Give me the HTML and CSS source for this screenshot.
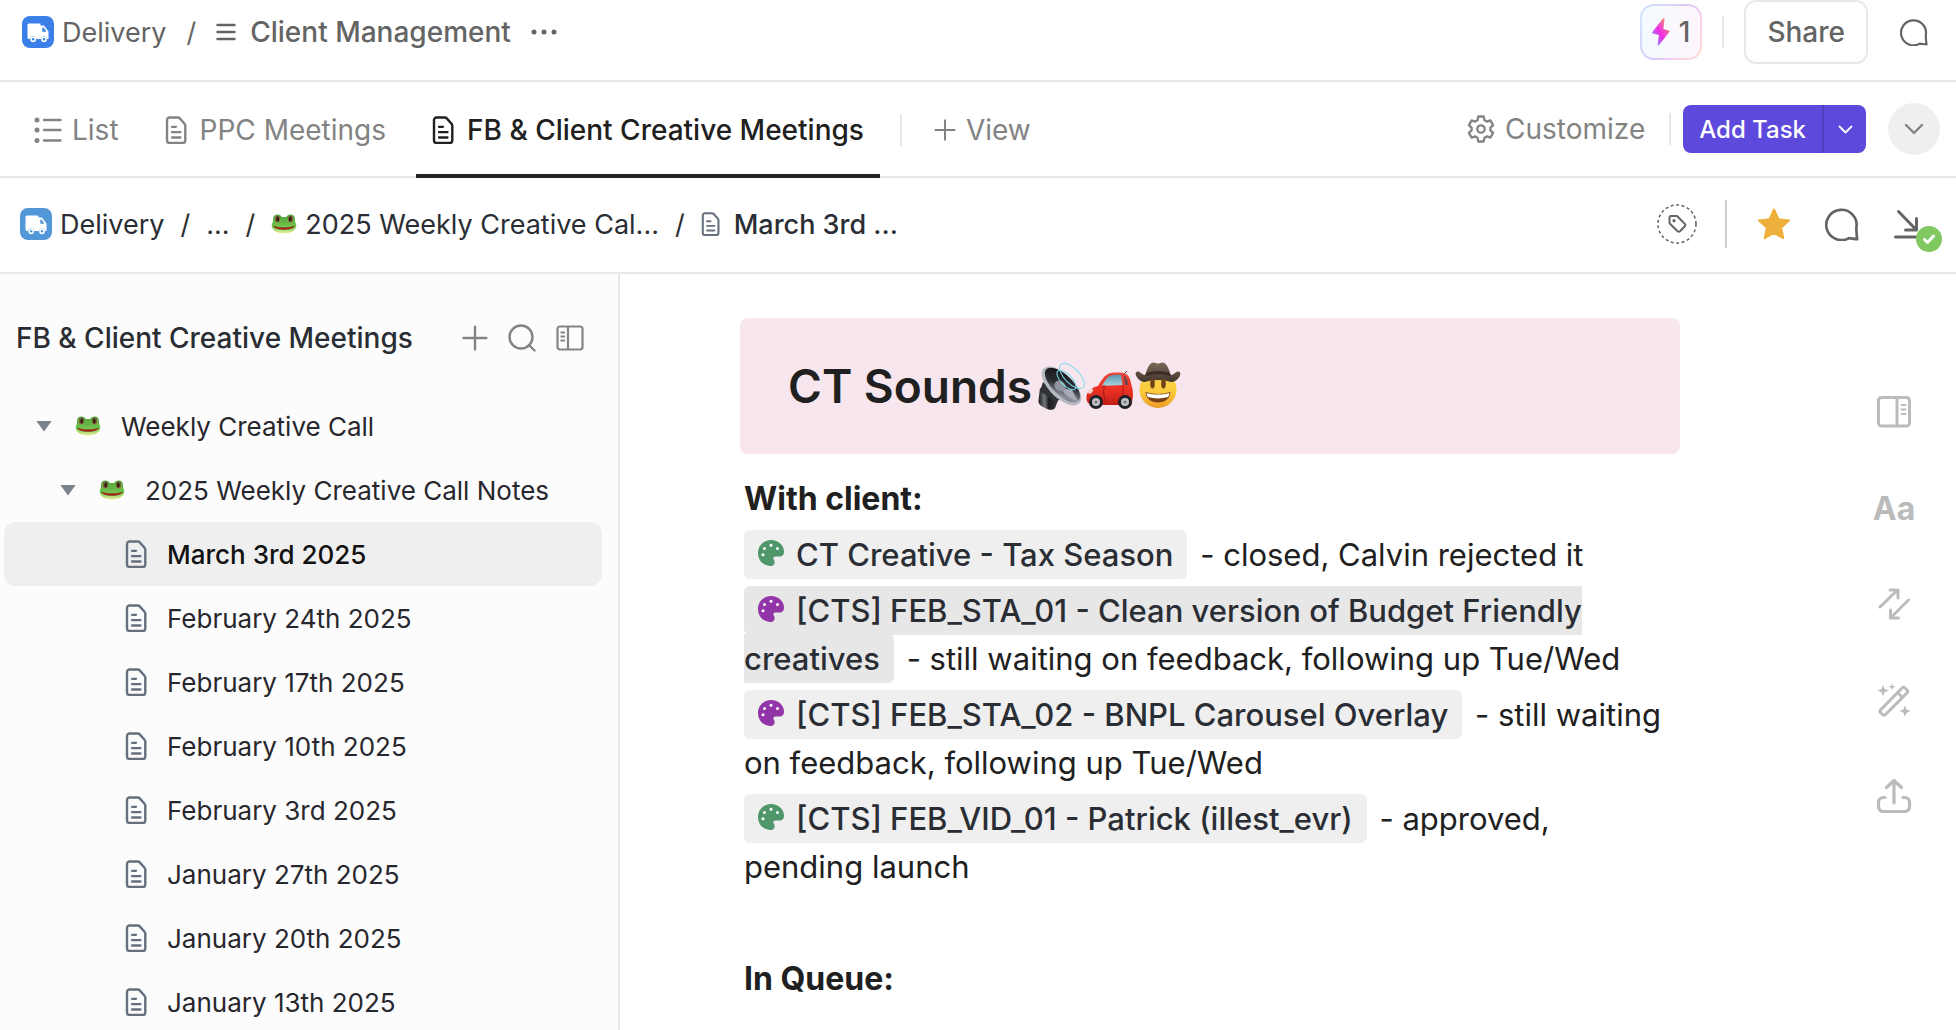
FILE: index.html
```
<!DOCTYPE html>
<html lang="en">
<head>
  <meta charset="UTF-8">
  <title>FB &amp; Client Creative Meetings</title>
  <meta name="viewport" content="width=device-width, initial-scale=1.0">
  <link rel="stylesheet" href="styles.css">
</head>
<body>

  <!-- Shared icons -->
  <svg class="sprite" aria-hidden="true">
    <defs>
      <linearGradient id="boltFill" x1="0" y1="1" x2="1" y2="0">
        <stop offset="0" stop-color="#5fb0ff"/>
        <stop offset="0.45" stop-color="#f02ee5"/>
        <stop offset="0.62" stop-color="#f04fc0"/>
        <stop offset="1" stop-color="#ffb52e"/>
      </linearGradient>
      <linearGradient id="frogFill" x1="0" y1="0" x2="0" y2="1">
        <stop offset="0" stop-color="#4fa03a"/>
        <stop offset="0.6" stop-color="#72c34c"/>
        <stop offset="1" stop-color="#e6f3a0"/>
      </linearGradient>
      <linearGradient id="coneFill" x1="0" y1="0" x2="1" y2="1">
        <stop offset="0" stop-color="#0d0e10"/>
        <stop offset="0.5" stop-color="#2c2f34"/>
        <stop offset="0.8" stop-color="#8d929c"/>
        <stop offset="1" stop-color="#2a2c30"/>
      </linearGradient>
      <linearGradient id="magnetFill" x1="0" y1="0" x2="1" y2="0">
        <stop offset="0" stop-color="#17181a"/>
        <stop offset="0.3" stop-color="#74777c"/>
        <stop offset="0.5" stop-color="#1c1d1f"/>
        <stop offset="1" stop-color="#3c3e42"/>
      </linearGradient>
      <linearGradient id="carFill" x1="0" y1="0" x2="0" y2="1">
        <stop offset="0" stop-color="#e8463c"/>
        <stop offset="0.5" stop-color="#ee3124"/>
        <stop offset="1" stop-color="#c21f17"/>
      </linearGradient>
      <linearGradient id="glassFill" x1="0" y1="0" x2="0" y2="1">
        <stop offset="0" stop-color="#5b97ad"/>
        <stop offset="1" stop-color="#a9d6e2"/>
      </linearGradient>
      <linearGradient id="faceFill" x1="0" y1="0" x2="0" y2="1">
        <stop offset="0" stop-color="#fbd84f"/>
        <stop offset="0.6" stop-color="#fbc93b"/>
        <stop offset="1" stop-color="#ee9a26"/>
      </linearGradient>
      <linearGradient id="hatFill" x1="0" y1="0" x2="0" y2="1">
        <stop offset="0" stop-color="#7b6a5b"/>
        <stop offset="1" stop-color="#43362c"/>
      </linearGradient>
    </defs>

    <symbol id="truck" viewBox="0 0 32 32">
      <path fill="#fff" d="M7 7.500h10.500a1 1 0 0 1 1 1v1H22l4.500 6v7.500h-1.300a3.200 3.200 0 0 0-6.300 0h-4.600a3.200 3.200 0 0 0-6.300 0H7a1.500 1.500 0 0 1-1.500-1.500V9A1.500 1.500 0 0 1 7 7.500zm13.300 4v4.300h4.200l-2.900-4.300z"/>
      <circle cx="11.200" cy="23.300" r="2.100" fill="none" stroke="#fff" stroke-width="1.600"/>
      <circle cx="22" cy="23.300" r="2.100" fill="none" stroke="#fff" stroke-width="1.600"/>
    </symbol>
    <symbol id="doc" viewBox="0 0 22 28">
      <path fill="none" stroke="currentColor" stroke-width="2.400" stroke-linejoin="round" d="M4.500 1.500h8.200c.8 0 1.500.3 2.100.9l4.700 5.300c.5.600.8 1.300.8 2v14.800a2.500 2.500 0 0 1-2.500 2.500H4.500A2.500 2.500 0 0 1 2 24.500V4A2.500 2.500 0 0 1 4.500 1.500z"/>
      <path fill="none" stroke="currentColor" stroke-width="2.300" stroke-linecap="round" d="M7 10.800h4M7 16.200h8.500M7 21.500h8.500"/>
    </symbol>
    <symbol id="frog" viewBox="0 0 26 20">
      <path fill="url(#frogFill)" d="M6.500.5c2 0 3.500 1 4.200 2.500h4.600C16 1.500 17.500.5 19.500.5c3 0 4.700 2.300 4.500 5-.1 1.300 0 2 .6 3.200 2.300 4.800-1.200 10.800-11.600 10.800S-.9 13.500 1.400 8.700C2 7.500 2.100 6.800 2 5.500 1.800 2.800 3.500.5 6.500.5z"/>
      <ellipse cx="6.500" cy="5" rx="2.500" ry="3.200" fill="#8b5a3a"/>
      <ellipse cx="6.700" cy="5" rx="1.300" ry="2.400" fill="#261c14"/>
      <ellipse cx="19.500" cy="5" rx="2.500" ry="3.200" fill="#8b5a3a"/>
      <ellipse cx="19.300" cy="5" rx="1.300" ry="2.400" fill="#261c14"/>
      <path fill="#b3261b" stroke="#5d2a14" stroke-width="0.500" d="M2.500 12c3 1.200 6.500 1.600 10.500 1.600s7.500-.4 10.500-1.600c-1.500 2.600-5.500 3.500-10.500 3.500S4 14.600 2.500 12z"/>
      <circle cx="11.700" cy="8" r="0.400" fill="#2f6b22"/>
      <circle cx="14.300" cy="8" r="0.400" fill="#2f6b22"/>
    </symbol>
    <symbol id="palette" viewBox="0 0 26 26">
      <path fill="currentColor" d="M13 0c7.500 0 13 5.300 13 11.500 0 3.600-1.800 5-4.500 5h-4c-2 0-2.600 1.500-1.700 3 .8 1.300 1 2.400.7 3.600-.4 1.900-1.700 2.900-3.500 2.900C5.500 26 0 20.500 0 13S5.800 0 13 0z"/>
      <g fill="#fff"><circle cx="6.500" cy="8.500" r="1.500"/><circle cx="13" cy="5.200" r="1.500"/><circle cx="19.500" cy="8.500" r="1.500"/><circle cx="5" cy="14.800" r="1.500"/></g>
    </symbol>
    <symbol id="chat" viewBox="0 0 28 28">
      <path fill="none" stroke="currentColor" stroke-width="2.200" stroke-linejoin="round" stroke-linecap="round" d="M26.500 26.500c-2-.2-4.300-.6-6.700-.9a12.500 12.500 0 1 1 6.100-9c-.3 3.300.3 6.500.6 9.900z"/>
    </symbol>
    <symbol id="chevron" viewBox="0 0 20 12">
      <path fill="none" stroke="currentColor" stroke-width="2.400" stroke-linecap="round" stroke-linejoin="round" d="M2 2l8 8 8-8"/>
    </symbol>
    <symbol id="plus" viewBox="0 0 24 24">
      <path fill="none" stroke="currentColor" stroke-width="2.200" stroke-linecap="round" d="M12 1.500v21M1.500 12h21"/>
    </symbol>
  </svg>

  <header class="topbar">
    <nav class="crumbs" aria-label="Location">
      <a class="crumb" href="#"><svg class="space-icon"><use href="#truck"/></svg>Delivery</a>
      <span class="slash">/</span>
      <a class="crumb strong" href="#">
        <svg class="lines-icon" viewBox="0 0 20 18"><path fill="none" stroke="currentColor" stroke-width="2.400" stroke-linecap="round" d="M1.500 2h17M1.500 9h17M1.500 16h17"/></svg>
        Client Management
      </a>
      <button class="icon-btn more" aria-label="More">
        <svg width="26" height="6" viewBox="0 0 26 6" fill="currentColor"><circle cx="3" cy="3" r="2.500"/><circle cx="13" cy="3" r="2.500"/><circle cx="23" cy="3" r="2.500"/></svg>
      </button>
    </nav>
    <div class="top-actions">
      <button class="ai-pill">
        <svg width="18" height="28" viewBox="0 0 18 28"><path fill="url(#boltFill)" d="M11 .6c.8-.9 1.700-.4 1.500.7L11.400 11l5.400 1.400c.9.200 1 .9.500 1.500L7 27c-.8.900-1.600.4-1.400-.6L6.900 17 .9 15.500c-.8-.2-1-.9-.5-1.500z"/></svg>
        1
      </button>
      <span class="divider"></span>
      <button class="share">Share</button>
      <button class="icon-btn top-chat" aria-label="Comments"><svg width="28" height="28"><use href="#chat"/></svg></button>
    </div>
  </header>

  <div class="tabbar">
    <nav class="tabs" aria-label="Views">
      <a class="tab" href="#">
        <svg width="28" height="28" viewBox="0 0 28 28"><g fill="currentColor"><circle cx="3" cy="4" r="2.500"/><circle cx="3" cy="14" r="2.500"/><circle cx="3" cy="24.500" r="2.500"/></g><path fill="none" stroke="currentColor" stroke-width="2.400" stroke-linecap="round" d="M10 4h16.500M10 14h16.500M10 24.500h16.500"/></svg>
        List
      </a>
      <a class="tab" href="#"><svg class="doc-icon"><use href="#doc"/></svg>PPC Meetings</a>
      <a class="tab active" href="#" aria-current="page"><svg class="doc-icon"><use href="#doc"/></svg>FB &amp; Client Creative Meetings</a>
      <span class="divider"></span>
      <button class="tab add-view"><svg width="22" height="22"><use href="#plus"/></svg>View</button>
    </nav>
    <div class="tab-actions">
      <button class="customize">
        <svg width="28" height="28" viewBox="0 0 28 28" fill="none" stroke="currentColor" stroke-width="2.300" stroke-linejoin="round"><path d="M11.300 1.500h5.400l.8 3.800 2.300 1.300 3.600-1.200 2.700 4.700-2.700 2.500v2.800l2.700 2.500-2.700 4.700-3.600-1.200-2.300 1.300-.8 3.800h-5.400l-.8-3.800-2.300-1.300-3.600 1.200-2.700-4.700 2.700-2.500v-2.800l-2.700-2.500 2.700-4.700 3.600 1.200 2.300-1.300z"/><circle cx="14" cy="14" r="3.700"/></svg>
        Customize
      </button>
      <span class="divider"></span>
      <div class="add-task">
        <button class="add-main">Add Task</button>
        <button class="add-more" aria-label="More task types"><svg width="15" height="9"><use href="#chevron"/></svg></button>
      </div>
      <button class="collapse" aria-label="Collapse header"><svg width="20" height="12"><use href="#chevron"/></svg></button>
    </div>
  </div>

  <div class="docbar">
    <nav class="crumbs dark" aria-label="Doc path">
      <a class="crumb" href="#"><svg class="space-icon pale"><use href="#truck"/></svg>Delivery</a>
      <span class="slash">/</span>
      <a class="crumb" href="#">...</a>
      <span class="slash">/</span>
      <a class="crumb" href="#"><svg class="frog"><use href="#frog"/></svg>2025 Weekly Creative Cal...</a>
      <span class="slash">/</span>
      <a class="crumb current" href="#"><svg class="doc-small"><use href="#doc"/></svg>March 3rd ...</a>
    </nav>
    <div class="doc-actions">
      <button class="tag-btn" aria-label="Add tag">
        <svg width="40" height="40" viewBox="0 0 40 40" fill="none" stroke="currentColor"><circle cx="20" cy="20" r="19" stroke-width="1.500" stroke-dasharray="3 2.500"/><path stroke-width="2" stroke-linejoin="round" d="M13.500 12h5.700c.6 0 1.200.2 1.600.7l7 7.200c.7.700.7 1.600 0 2.300l-4.800 5c-.7.700-1.700.7-2.400 0l-7.400-7.200a2 2 0 0 1-.7-1.500V13.500c0-.9.300-1.500 1-1.500z"/><circle cx="17" cy="16.700" r="1.600" fill="currentColor" stroke="none"/></svg>
      </button>
      <span class="divider tall"></span>
      <button class="icon-btn star" aria-label="Favorite">
        <svg width="34" height="32" viewBox="0 0 34 32"><path fill="#eeb03c" stroke="#eeb03c" stroke-width="2" stroke-linejoin="round" d="M17 1.500l4.400 9.700 10.600 1.200-7.800 7.200 2.100 10.600L17 25l-9.300 5.200 2.100-10.600L2 12.400l10.600-1.200z"/></svg>
      </button>
      <button class="icon-btn" aria-label="Comments"><svg width="34" height="34"><use href="#chat"/></svg></button>
      <button class="icon-btn download" aria-label="Saved">
        <svg width="26" height="30" viewBox="0 0 26 30" fill="none" stroke="currentColor" stroke-width="3" stroke-linecap="round" stroke-linejoin="round"><path d="M4.500 2.500L22 20.500M22.500 9.500v11.500H11.500M1.500 28h23"/></svg>
        <span class="saved"><svg width="26" height="26" viewBox="0 0 26 26"><path fill="none" stroke="#fff" stroke-width="3" stroke-linecap="round" stroke-linejoin="round" d="M8.500 13.500l3 3 6-6.500"/></svg></span>
      </button>
    </div>
  </div>

  <div class="workspace">
    <aside class="sidebar">
      <div class="side-head">
        <h2>FB &amp; Client Creative Meetings</h2>
        <button class="icon-btn" aria-label="Add page"><svg width="26" height="26"><use href="#plus"/></svg></button>
        <button class="icon-btn" aria-label="Search">
          <svg width="28" height="28" viewBox="0 0 28 28" fill="none" stroke="currentColor" stroke-width="2.400" stroke-linecap="round"><circle cx="13" cy="13" r="11.500"/><path d="M21 21l5.500 5.500"/></svg>
        </button>
        <button class="icon-btn" aria-label="Toggle sidebar">
          <svg width="28" height="26" viewBox="0 0 28 26" fill="none" stroke="currentColor" stroke-width="2.200"><rect x="1.500" y="1.500" width="25" height="23" rx="2.500"/><path d="M12 1.500v23M4.500 7.500H9M4.500 11.500H9M4.500 15.500H9"/></svg>
        </button>
      </div>
      <ul class="tree">
        <li class="node level-1"><button class="caret" aria-label="Collapse"></button><a href="#"><svg class="frog"><use href="#frog"/></svg>Weekly Creative Call</a></li>
        <li class="node level-2"><button class="caret" aria-label="Collapse"></button><a href="#"><svg class="frog"><use href="#frog"/></svg>2025 Weekly Creative Call Notes</a></li>
        <li class="node level-3 selected"><a href="#"><svg class="doc-icon"><use href="#doc"/></svg>March 3rd 2025</a></li>
        <li class="node level-3"><a href="#"><svg class="doc-icon"><use href="#doc"/></svg>February 24th 2025</a></li>
        <li class="node level-3"><a href="#"><svg class="doc-icon"><use href="#doc"/></svg>February 17th 2025</a></li>
        <li class="node level-3"><a href="#"><svg class="doc-icon"><use href="#doc"/></svg>February 10th 2025</a></li>
        <li class="node level-3"><a href="#"><svg class="doc-icon"><use href="#doc"/></svg>February 3rd 2025</a></li>
        <li class="node level-3"><a href="#"><svg class="doc-icon"><use href="#doc"/></svg>January 27th 2025</a></li>
        <li class="node level-3"><a href="#"><svg class="doc-icon"><use href="#doc"/></svg>January 20th 2025</a></li>
        <li class="node level-3"><a href="#"><svg class="doc-icon"><use href="#doc"/></svg>January 13th 2025</a></li>
      </ul>
    </aside>

    <main class="page">
      <article class="doc">
        <h1 class="banner">
          CT Sounds
          <span class="emojis">
            <svg viewBox="0 0 48 48">
              <path fill="url(#magnetFill)" d="M2 26l19 10-4 10c-1 2-5 2.500-9 .5s-8-4-7.500-8z"/>
              <path fill="#303236" d="M5 20l20 15-7 5L2 29z"/>
              <ellipse cx="23.500" cy="24" rx="25" ry="12" transform="rotate(44 23.500 24)" fill="#b4b8c1"/>
              <ellipse cx="24.500" cy="23" rx="22.500" ry="10" transform="rotate(44 24.500 23)" fill="url(#coneFill)"/>
              <path fill="#a5aab5" d="M23 26l11 2 6 11c-7-1-14-6-17-13z"/>
              <ellipse cx="22" cy="24" rx="6" ry="5" transform="rotate(40 22 24)" fill="#8f949e"/>
              <g fill="none" stroke="#7fdced" stroke-width="1"><ellipse cx="34" cy="14" rx="16" ry="7.500" transform="rotate(46 34 14)"/><ellipse cx="28.500" cy="18" rx="12.500" ry="5.500" transform="rotate(46 28.500 18)"/></g>
            </svg>
            <svg viewBox="0 0 48 48">
              <path fill="none" stroke="#3c3c40" stroke-width="1" d="M38 12l3-3"/>
              <path fill="url(#carFill)" d="M12 24c3-5 6-10 10-12 4-1.700 13-2 18 0 3 1.500 4 5 5 9l1.500 6c1 5 .5 11-1.500 16H6c-4-1-6-4-5.500-8 .4-5 4-9 11.500-11z"/>
              <path fill="url(#glassFill)" d="M16 24c2-4.500 5-8.500 7.500-10 3.500-1.300 7.500-1.500 11.500-1.100L36.500 23z"/>
              <path fill="#71474b" d="M38 13.500c2.500 1 3.500 4.500 4.300 9.500h-3.600z"/>
              <ellipse cx="4.500" cy="29" rx="2" ry="3" transform="rotate(35 4.500 29)" fill="#f6d7cf"/>
              <path fill="none" stroke="#a41b17" stroke-width="1" d="M17 26l2 14M37 24v10"/>
              <ellipse cx="18" cy="25.500" rx="2.500" ry="2.200" fill="#d22a20"/>
              <g fill="#202126"><circle cx="10" cy="40" r="7"/><circle cx="39" cy="40" r="7"/></g>
              <g fill="#bfc2c7"><circle cx="10" cy="40" r="4"/><circle cx="39" cy="40" r="4"/></g>
              <g fill="#75777d"><circle cx="10" cy="40" r="1.600"/><circle cx="39" cy="40" r="1.600"/></g>
            </svg>
            <svg viewBox="0 0 48 48">
              <circle cx="24" cy="27.500" r="18.500" fill="url(#faceFill)"/>
              <path fill="url(#hatFill)" d="M11 13c2-5 3.500-10 6.500-12C20-.5 22 1.500 24 1.500S28-.5 30.500 1C33.500 3 35 8 37 13c3-.3 4.500-3 6.500-3.500 2.500-.5 3.500 1.500 2.500 4-2 4-5 6.500-9 6.500-3.500-1.300-8-2-13-2s-9.500.7-13 2c-4 0-7-2.500-9-6.500-1-2.500 0-4.500 2.500-4C6.500 10 8 12.700 11 13z"/>
              <path fill="#372b23" d="M12.500 11c7-2.500 16-2.500 23 0l1 3c-8-2.500-17-2.500-25 0z"/>
              <g fill="#6d4119"><ellipse cx="18.500" cy="21.500" rx="2.300" ry="5"/><ellipse cx="29.500" cy="21.500" rx="2.300" ry="5"/></g>
              <path fill="#7a4014" d="M11.500 30c8 2.500 17 2.500 25 0-.5 6.500-5.500 10.500-12.500 10.500S12 36.500 11.500 30z"/>
              <path fill="#fff" d="M12.500 31c7 2 16 2 23 0-.5 3-1 3.700-2 4.300-6 1.500-13 1.500-19 0-1.200-.6-1.600-1.500-2-4.300z"/>
            </svg>
          </span>
        </h1>

        <div class="notes">
          <h3>With client:</h3>
          <p><a class="chip green" href="#"><svg><use href="#palette"/></svg>CT Creative - Tax Season</a> - closed, Calvin rejected it</p>
          <p><a class="chip purple hovered" href="#"><svg><use href="#palette"/></svg>[CTS] FEB_STA_01 - Clean version of Budget Friendly creatives</a> - still waiting on feedback, following up Tue/Wed</p>
          <p><a class="chip purple" href="#"><svg><use href="#palette"/></svg>[CTS] FEB_STA_02 - BNPL Carousel Overlay</a> - still waiting on feedback, following up Tue/Wed</p>
          <p><a class="chip green" href="#"><svg><use href="#palette"/></svg>[CTS] FEB_VID_01 - Patrick (illest_evr)</a> - approved, pending launch</p>
          <p><br></p>
          <h3>In Queue:</h3>
        </div>
      </article>

      <div class="rail">
        <button aria-label="Page details">
          <svg width="36" height="32" viewBox="0 0 36 32" fill="none" stroke="currentColor" stroke-width="3"><rect x="2.500" y="1.500" width="31" height="28.500" rx="3"/><path d="M21 1.500v28.500"/><path stroke-width="2" stroke-linecap="round" d="M25.500 9h4M25.500 13.500h4M25.500 18h4"/></svg>
        </button>
        <button class="type" aria-label="Typography">Aa</button>
        <button aria-label="Relationships">
          <svg width="32" height="32" viewBox="0 0 32 32" fill="none" stroke="currentColor" stroke-width="3" stroke-linecap="round" stroke-linejoin="round"><path d="M2 19L19.500 2M12 2h8v8M30.500 12L13 29.500M12.500 22v8h8"/></svg>
        </button>
        <button aria-label="AI tools">
          <svg width="34" height="34" viewBox="0 0 34 34"><path fill="none" stroke="currentColor" stroke-width="3" stroke-linejoin="round" d="M3.500 27L25 5c1-1 2-1 3 0l2 2c1 1 1 2 0 3L8.500 31.500c-1 1-2 1-3 0l-2-2c-.8-.8-.8-1.700 0-2.500zM20.500 9.500l5.500 5.500"/><path fill="currentColor" d="M6 2l1.500 4L12 7.500 7.500 9.200 6 13.500 4.500 9.200.5 7.500l4-1.500zM15 .5l1 2.300 2.500 1-2.500 1L15 7l-1-2.200-2.500-1 2.500-1zM28 22.500l1.600 4 4 1.500-4 1.700-1.600 4-1.600-4-4-1.700 4-1.500z"/></svg>
        </button>
        <button aria-label="Share doc">
          <svg width="36" height="36" viewBox="0 0 36 36" fill="none" stroke="currentColor" stroke-width="3.200" stroke-linecap="round" stroke-linejoin="round"><path d="M18 25V3M10.500 9.500L18 2.500l7.500 7M9 19.500H7.500c-3 0-5 2-5 5v4c0 3 2 5 5 5h21c3 0 5-2 5-5v-4c0-3-2-5-5-5H27"/></svg>
        </button>
      </div>
    </main>
  </div>

</body>
</html>
```
FILE: styles.css
```
* {
  box-sizing: border-box;
}

body {
  margin: 0;
  height: 100vh;
  overflow: hidden;
  display: flex;
  flex-direction: column;
  font-family: Inter, 'Liberation Sans', sans-serif;
  font-size: 27px;
  color: #202020;
  background: #fff;
}

a {
  color: inherit;
  text-decoration: none;
}

button {
  font: inherit;
  color: inherit;
  background: none;
  border: none;
  padding: 0;
  cursor: pointer;
}

svg {
  display: block;
  flex: none;
}

.sprite {
  position: absolute;
  width: 0;
  height: 0;
}

.icon-btn {
  display: flex;
  align-items: center;
  justify-content: center;
}

.divider {
  width: 2px;
  height: 32px;
  background: #e8e8e8;
}

.doc-icon {
  width: 22px;
  height: 28px;
}

.frog {
  width: 26px;
  height: 20px;
}

/* Top bar */
.topbar,
.tabbar,
.docbar {
  display: flex;
  flex: none;
  justify-content: space-between;
  border-bottom: 2px solid #e8e8e8;
  white-space: nowrap;
}

.topbar {
  height: 82px;
  padding: 0 28px 16px 22px;
  color: #646464;
}

.crumbs {
  display: flex;
  align-items: center;
  gap: 20px;
}

.crumb {
  display: flex;
  align-items: center;
  gap: 8px;
}

.crumb.strong {
  gap: 14px;
  font-size: 28px;
  font-weight: 500;
}

.space-icon {
  width: 32px;
  height: 32px;
  border-radius: 8px;
  background: #3b80e8;
}

.space-icon.pale {
  background: #5298d8;
}

.lines-icon {
  width: 20px;
  height: 18px;
}

.top-actions {
  display: flex;
  align-items: center;
  gap: 20px;
}

.ai-pill {
  display: flex;
  align-items: center;
  gap: 9px;
  height: 56px;
  padding: 0 10px;
  border: 2px solid transparent;
  border-radius: 14px;
  font-size: 28px;
  font-weight: 500;
  background:
    linear-gradient(90deg, #f3faff, #fef6fc) padding-box,
    linear-gradient(120deg, #cfe8f8, #dcc8f8 50%, #fad0ea 75%, #fbdccb) border-box;
}

.share {
  height: 64px;
  padding: 0 21px;
  border: 2px solid #e8e8e8;
  border-radius: 12px;
  font-size: 28px;
  font-weight: 500;
}

.top-chat {
  margin-left: 12px;
}

/* View tabs */
.tabbar {
  height: 96px;
  padding: 0 16px 0 18px;
  color: #838383;
}

/* 2px taller than the bar, so the active line covers its border */
.tabs {
  display: flex;
  align-items: center;
  height: 96px;
}

.tab {
  display: flex;
  align-items: center;
  gap: 10px;
  height: 100%;
  padding: 0 16px;
  border-bottom: 4px solid transparent;
  border-top: 4px solid transparent;
  font-size: 28px;
}

.tab .doc-icon {
  margin-right: 3px;
}

.tab + .tab {
  margin-left: 14px;
}

.tab.active {
  color: #202020;
  font-weight: 500;
  border-bottom-color: #202020;
}

.tabs .divider {
  margin: 0 16px 0 20px;
}

.tab-actions {
  display: flex;
  align-items: center;
}

.customize {
  display: flex;
  align-items: center;
  gap: 10px;
  font-size: 28px;
}

.tab-actions .divider {
  margin: 0 12px 0 24px;
}

.add-task {
  display: flex;
  height: 48px;
  color: #fff;
  background: #5d49dc;
  border-radius: 8px;
  font-size: 24px;
  font-weight: 500;
}

.add-main {
  padding: 0 16px;
}

.add-more {
  display: flex;
  align-items: center;
  justify-content: center;
  width: 44px;
  border-left: 2px solid #503dc0;
}

.collapse {
  display: flex;
  align-items: center;
  justify-content: center;
  width: 52px;
  height: 52px;
  margin-left: 22px;
  border-radius: 50%;
  background: #efefef;
}

/* Doc breadcrumb */
.docbar {
  height: 96px;
  padding: 0 36px 2px 20px;
}

.crumbs.dark {
  gap: 16px;
  color: #2a2e34;
}

.crumb.current {
  gap: 14px;
  font-weight: 500;
}

.doc-small {
  width: 19px;
  height: 24px;
  color: #656f7d;
}

.doc-actions {
  display: flex;
  align-items: center;
  color: #646464;
}

.divider.tall {
  height: 48px;
  margin: 0 30px 0 28px;
  background: #d0d0d0;
}

.star {
  margin-right: 34px;
}

.download {
  position: relative;
  margin-left: 35px;
}

.saved {
  position: absolute;
  left: 22px;
  top: 17px;
  width: 26px;
  height: 26px;
  border-radius: 50%;
  background: #80c860;
}

/* Sidebar */
.workspace {
  display: flex;
  flex: 1;
  min-height: 0;
}

.sidebar {
  flex: none;
  width: 620px;
  overflow: hidden;
  background: #fcfcfc;
  border-right: 2px solid #e8e8e8;
}

.side-head {
  display: flex;
  align-items: center;
  gap: 20px;
  height: 120px;
  padding: 8px 34px 0 16px;
  color: #838383;
}

.side-head h2 {
  margin: 0 auto 0 0;
  font-size: 28px;
  font-weight: 500;
  color: #2a2e34;
}

.tree {
  list-style: none;
  margin: 0;
  padding: 0 16px 0 4px;
}

.node {
  display: flex;
  align-items: center;
  height: 64px;
  padding-left: 32px;
  border-radius: 12px;
  font-size: 26px;
  color: #27272d;
  white-space: nowrap;
}

.node a {
  display: flex;
  align-items: center;
  gap: 20px;
}

.node .doc-icon {
  color: #656f7d;
}

.level-2 {
  padding-left: 56px;
}

.level-3 {
  padding-left: 121px;
}

.selected {
  color: #111;
  font-weight: 500;
  background: #efefef;
}

.caret {
  width: 16px;
  height: 11px;
  margin-right: 23px;
  background: #7c828d;
  clip-path: polygon(0 0, 100% 0, 50% 100%);
}

/* Page */
.page {
  display: flex;
  flex: 1;
  min-width: 0;
}

.doc {
  flex: 1;
  max-width: 940px;
  margin: 44px auto 0;
}

.banner {
  display: flex;
  align-items: center;
  gap: 6px;
  margin: 0;
  height: 136px;
  padding: 0 48px;
  border-radius: 8px;
  background: #f7e6ed;
  font-size: 46px;
  font-weight: 600;
}

.emojis {
  display: flex;
}

.emojis svg {
  width: 48px;
  height: 48px;
  overflow: visible;
}

.notes {
  padding: 21px 8px 0 4px;
  font-size: 31px;
  line-height: 48px;
}

.notes h3,
.notes p {
  margin: 0 0 8px;
}

.notes h3 {
  font-size: 32px;
  font-weight: 700;
}

.chip {
  padding: 6px 14px;
  margin-right: 4px;
  border-radius: 6px;
  background: #efefef;
  color: #2a2e34;
  font-weight: 500;
}

.chip svg {
  display: inline-block;
  width: 26px;
  height: 26px;
  margin-right: 12px;
}

.chip.hovered {
  background: #e7e7e7;
}

.green svg {
  color: #4f966b;
}

.purple svg {
  color: #9135a8;
}

/* Right tool rail */
.rail {
  flex: none;
  width: 156px;
  padding: 90px 0 0 32px;
  color: #bbb;
}

.rail button {
  display: flex;
  align-items: center;
  justify-content: center;
  width: 100%;
  height: 96px;
}

.rail .type {
  font-size: 32px;
  font-weight: 700;
}
```
